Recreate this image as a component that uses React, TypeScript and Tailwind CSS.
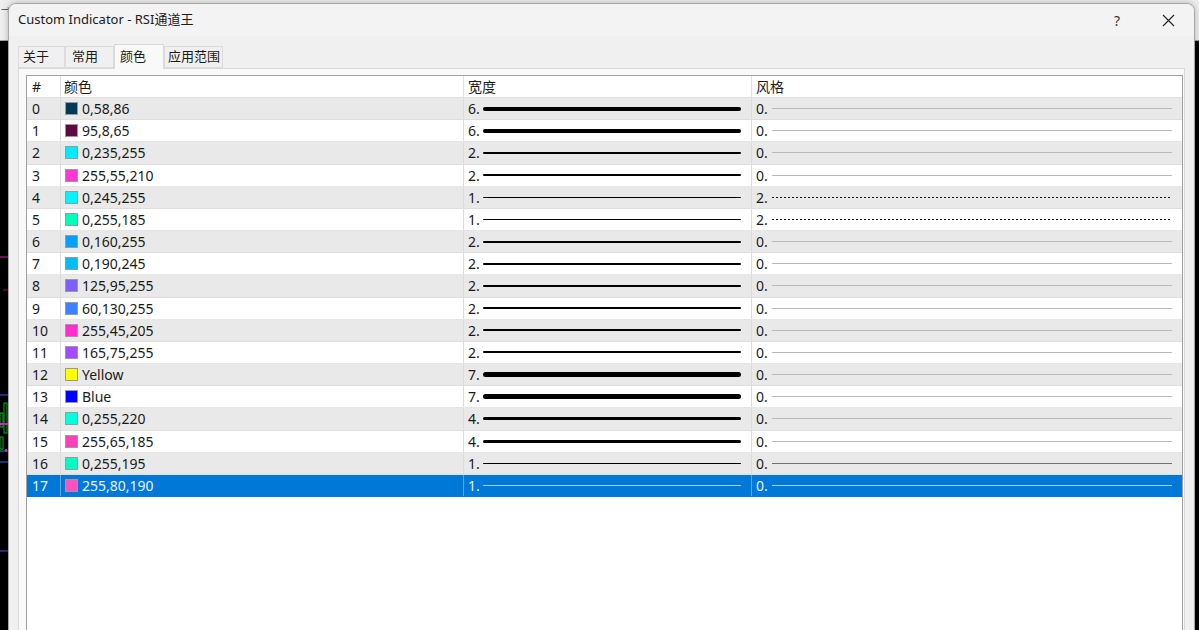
import React from 'react';

type Row = {
  id: number;
  label: string;
  rgb: string;
  width: number;
  style: number;
};

const rows: Row[] = [
  { id: 0, label: '0,58,86', rgb: 'rgb(0,58,86)', width: 6, style: 0 },
  { id: 1, label: '95,8,65', rgb: 'rgb(95,8,65)', width: 6, style: 0 },
  { id: 2, label: '0,235,255', rgb: 'rgb(0,235,255)', width: 2, style: 0 },
  { id: 3, label: '255,55,210', rgb: 'rgb(255,55,210)', width: 2, style: 0 },
  { id: 4, label: '0,245,255', rgb: 'rgb(0,245,255)', width: 1, style: 2 },
  { id: 5, label: '0,255,185', rgb: 'rgb(0,255,185)', width: 1, style: 2 },
  { id: 6, label: '0,160,255', rgb: 'rgb(0,160,255)', width: 2, style: 0 },
  { id: 7, label: '0,190,245', rgb: 'rgb(0,190,245)', width: 2, style: 0 },
  { id: 8, label: '125,95,255', rgb: 'rgb(125,95,255)', width: 2, style: 0 },
  { id: 9, label: '60,130,255', rgb: 'rgb(60,130,255)', width: 2, style: 0 },
  { id: 10, label: '255,45,205', rgb: 'rgb(255,45,205)', width: 2, style: 0 },
  { id: 11, label: '165,75,255', rgb: 'rgb(165,75,255)', width: 2, style: 0 },
  { id: 12, label: 'Yellow', rgb: 'rgb(255,255,0)', width: 7, style: 0 },
  { id: 13, label: 'Blue', rgb: 'rgb(0,0,255)', width: 7, style: 0 },
  { id: 14, label: '0,255,220', rgb: 'rgb(0,255,220)', width: 4, style: 0 },
  { id: 15, label: '255,65,185', rgb: 'rgb(255,65,185)', width: 4, style: 0 },
  { id: 16, label: '0,255,195', rgb: 'rgb(0,255,195)', width: 1, style: 0 },
  { id: 17, label: '255,80,190', rgb: 'rgb(255,80,190)', width: 1, style: 0 },
];

const SELECTED = 17;

// thickness of the sample line in the width column
const thickness: Record<number, string> = {
  1: 'h-px',
  2: 'h-[2px]',
  4: 'h-[3px]',
  6: 'h-[4px]',
  7: 'h-[5px]',
};

const tabs = [
  { label: '关于', cls: 'w-[47px] pl-[4px]' },
  { label: '常用', cls: 'w-[49px] pl-[6px]' },
  { label: '颜色', cls: 'w-[50px] pl-[5px]' },
  { label: '应用范围', cls: 'w-[59px] pl-[3px]' },
];

function WidthLine({ width, selected }: { width: number; selected: boolean }) {
  return (
    <div
      className={`flex-1 ml-[3px] mr-[10px] rounded-full ${thickness[width]} ${
        selected ? 'bg-[#a9d1f2]' : 'bg-black'
      }`}
    />
  );
}

function StyleLine({ style, selected, dark }: { style: number; selected: boolean; dark: boolean }) {
  if (style === 2) {
    return (
      <div className="flex-1 ml-[4px] mr-[10px] h-px bg-[repeating-linear-gradient(90deg,#111_0_2px,transparent_2px_4px)]" />
    );
  }
  return (
    <div
      className={`flex-1 ml-[4px] mr-[10px] h-px ${
        selected ? 'bg-[#a9d1f2]' : dark ? 'bg-[#707070]' : 'bg-[#b9b9b9]'
      }`}
    />
  );
}

function ChartStrip() {
  return (
    <svg className="absolute left-0 top-[41px]" width="10" height="589" viewBox="0 0 10 589">
      <line x1="3" y1="249" x2="10" y2="249" stroke="#b0102a" strokeWidth="1" />
      <line x1="0" y1="216" x2="10" y2="216" stroke="#e020c0" strokeWidth="1" />
      <line x1="0" y1="354" x2="10" y2="354" stroke="#7040ff" strokeWidth="1" />
      <rect x="0" y="372" width="3" height="14" fill="none" stroke="#10b020" strokeWidth="1" />
      <rect x="4" y="362" width="3" height="30" fill="none" stroke="#10b020" strokeWidth="1" />
      <line x1="0" y1="383" x2="10" y2="383" stroke="#e020c0" strokeWidth="2" />
      <rect x="0" y="396" width="3" height="12" fill="none" stroke="#10b020" strokeWidth="1" />
      <line x1="0" y1="410" x2="10" y2="410" stroke="#2090c0" strokeWidth="1" />
      <rect x="5" y="408" width="2" height="3" fill="#e020c0" />
      <line x1="0" y1="421" x2="10" y2="421" stroke="#3060ff" strokeWidth="1" />
      <line x1="0" y1="510" x2="10" y2="510" stroke="#7040ff" strokeWidth="1" />
    </svg>
  );
}

export default function App() {
  return (
    <div className="relative w-[1199px] h-[630px] overflow-hidden bg-black font-['Noto_Sans','Noto_Sans_CJK_SC',sans-serif] text-[13px] text-[#1a1a1a]">
      {/* terminal toolbar behind the dialog */}
      <div className="h-[41px] bg-[#eeeeee] border-b border-[#a0a0a0] flex items-start pl-px pt-[5px]">
        <span className="text-[10px] leading-none text-[#444]">→</span>
      </div>
      <ChartStrip />

      {/* dialog window */}
      <div className="absolute left-[8px] top-[3px] w-[1187px] h-[640px] rounded-t-[8px] border border-[#a8a8a8] bg-[#f0f0f0] flex flex-col shadow-[0_0_6px_rgba(0,0,0,0.25)]">
        <div className="h-[32px] shrink-0 flex items-center pl-[9px] rounded-t-[8px] bg-[#f3f3f3]">
          <span className="flex-1 text-[13px] text-[#1a1a1a]">Custom Indicator - RSI通道王</span>
          <div className="w-[46px] h-[32px] flex items-center justify-center text-[14px] text-[#333]">?</div>
          <div className="w-[46px] h-[32px] ml-[5px] mr-[3px] flex items-center justify-center">
            <svg width="13" height="13" viewBox="0 0 13 13">
              <path d="M1 1 L12 12 M12 1 L1 12" stroke="#222" strokeWidth="1.1" fill="none" />
            </svg>
          </div>
        </div>

        <div className="flex-1 flex flex-col px-[9px] pt-[8px]">
          {/* tabs */}
          <div className="flex items-end h-[24px]">
            {tabs.map((t, i) =>
              i === 2 ? (
                <div
                  key={t.label}
                  className={`h-[25px] -mb-px flex items-center whitespace-nowrap bg-[#f9f9f9] border border-b-0 border-[#d9d9d9] z-10 ${t.cls}`}
                >
                  {t.label}
                </div>
              ) : (
                <div
                  key={t.label}
                  className={`h-[22px] flex items-center whitespace-nowrap bg-[#f0f0f0] border border-[#dcdcdc] ${t.cls}`}
                >
                  {t.label}
                </div>
              )
            )}
          </div>

          {/* tab panel */}
          <div className="flex-1 bg-[#f9f9f9] border border-[#d9d9d9] pl-[7px] pr-[7px] pt-[6px]">
            <div className="h-full w-[1157px] bg-white border border-[#a0a0a0] text-[14px]">
              {/* header */}
              <div className="flex h-[22px] border-b border-[#e0e0e0] bg-white">
                <div className="w-[33px] pl-[5px] flex items-center">#</div>
                <div className="w-[403px] pl-[3px] flex items-center border-l border-[#e0e0e0]">颜色</div>
                <div className="w-[288px] pl-[4px] flex items-center border-l border-[#e0e0e0]">宽度</div>
                <div className="flex-1 pl-[4px] flex items-center border-l border-[#e0e0e0]">风格</div>
              </div>

              {rows.map((r) => {
                const selected = r.id === SELECTED;
                const rowBg = selected
                  ? 'bg-[#0078d7] text-[#e8f3ff] border-[#0078d7]'
                  : r.id % 2 === 0
                  ? 'bg-[#e9e9e9] border-[#dedede]'
                  : 'bg-white border-[#e6e6e6]';
                const divider = selected ? 'border-[#5ea6e6]' : 'border-[#dcdcdc]';
                return (
                  <div key={r.id} className={`flex h-[22.18px] border-b ${rowBg}`}>
                    <div className="w-[33px] pl-[5px] flex items-center">{r.id}</div>
                    <div className={`w-[403px] pl-[4px] flex items-center border-l ${divider}`}>
                      <span
                        className="w-[13px] h-[13px] border border-[#9a9a9a] mr-[4px] shrink-0"
                        style={{ backgroundColor: r.rgb }}
                      />
                      <span>{r.label}</span>
                    </div>
                    <div className={`w-[288px] pl-[4px] flex items-center border-l ${divider}`}>
                      <span>{r.width}.</span>
                      <WidthLine width={r.width} selected={selected} />
                    </div>
                    <div className={`flex-1 pl-[4px] flex items-center border-l ${divider}`}>
                      <span>{r.style}.</span>
                      <StyleLine style={r.style} selected={selected} dark={r.id === 16} />
                    </div>
                  </div>
                );
              })}
            </div>
          </div>
        </div>
      </div>
    </div>
  );
}
